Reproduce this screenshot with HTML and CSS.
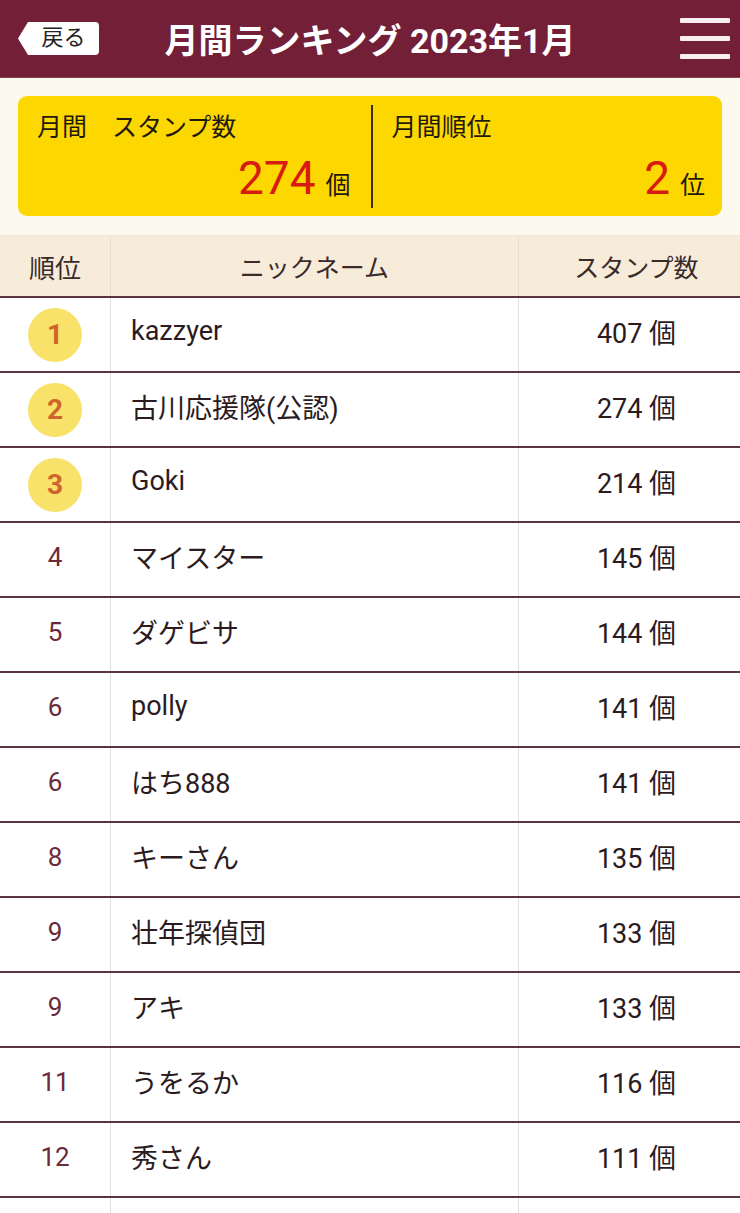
FILE: index.html
```html
<!DOCTYPE html>
<html lang="ja">
<head>
<meta charset="utf-8">
<title>月間ランキング</title>
<link rel="stylesheet" href="styles.css">
</head>
<body>
<header class="topbar">
  <div class="topbar-left"><a class="back-btn">戻る</a></div>
  <h1 class="title">月間ランキング 2023年1月</h1>
  <div class="topbar-right">
    <div class="menu-icon"><span></span><span></span><span></span></div>
  </div>
</header>

<section class="summary-wrap">
  <div class="summary">
    <div class="summary-cell">
      <div class="summary-label">月間　スタンプ数</div>
      <div class="summary-value"><span class="num">274</span><span class="unit">個</span></div>
    </div>
    <div class="summary-divider"></div>
    <div class="summary-cell">
      <div class="summary-label">月間順位</div>
      <div class="summary-value"><span class="num">2</span><span class="unit">位</span></div>
    </div>
  </div>
</section>

<div class="table">
  <div class="row head">
    <div class="c-rank">順位</div>
    <div class="c-name">ニックネーム</div>
    <div class="c-count">スタンプ数</div>
  </div>
  <div class="row">
    <div class="c-rank"><span class="medal">1</span></div>
    <div class="c-name">kazzyer</div>
    <div class="c-count">407 個</div>
  </div>
  <div class="row">
    <div class="c-rank"><span class="medal">2</span></div>
    <div class="c-name">古川応援隊(公認)</div>
    <div class="c-count">274 個</div>
  </div>
  <div class="row">
    <div class="c-rank"><span class="medal">3</span></div>
    <div class="c-name">Goki</div>
    <div class="c-count">214 個</div>
  </div>
  <div class="row">
    <div class="c-rank">4</div>
    <div class="c-name">マイスター</div>
    <div class="c-count">145 個</div>
  </div>
  <div class="row">
    <div class="c-rank">5</div>
    <div class="c-name">ダゲビサ</div>
    <div class="c-count">144 個</div>
  </div>
  <div class="row">
    <div class="c-rank">6</div>
    <div class="c-name">polly</div>
    <div class="c-count">141 個</div>
  </div>
  <div class="row">
    <div class="c-rank">6</div>
    <div class="c-name">はち888</div>
    <div class="c-count">141 個</div>
  </div>
  <div class="row">
    <div class="c-rank">8</div>
    <div class="c-name">キーさん</div>
    <div class="c-count">135 個</div>
  </div>
  <div class="row">
    <div class="c-rank">9</div>
    <div class="c-name">壮年探偵団</div>
    <div class="c-count">133 個</div>
  </div>
  <div class="row">
    <div class="c-rank">9</div>
    <div class="c-name">アキ</div>
    <div class="c-count">133 個</div>
  </div>
  <div class="row">
    <div class="c-rank">11</div>
    <div class="c-name">うをるか</div>
    <div class="c-count">116 個</div>
  </div>
  <div class="row">
    <div class="c-rank">12</div>
    <div class="c-name">秀さん</div>
    <div class="c-count">111 個</div>
  </div>
  <div class="row">
    <div class="c-rank"></div>
    <div class="c-name"></div>
    <div class="c-count"></div>
  </div>
</div>
</body>
</html>
```

FILE: styles.css
```css
* { box-sizing: border-box; }
html, body { margin: 0; padding: 0; }
body {
  background: #ffffff;
  font-family: Roboto, "Noto Sans CJK JP", sans-serif;
  color: #2b1b1e;
  width: 740px;
  overflow: hidden;
}

.topbar {
  height: 78px;
  background: #741f38;
  display: grid;
  grid-template-columns: 1fr auto 1fr;
  align-items: center;
  border-bottom: 1px solid #8a4456;
}
.topbar-left { padding-left: 18px; display: flex; align-items: center; }
.back-btn {
  display: flex;
  align-items: center;
  justify-content: center;
  width: 81px;
  height: 33px;
  margin-top: 0;
  padding-left: 10px;
  padding-bottom: 1px;
  background: #ffffff;
  color: #222;
  font-size: 22px;
  line-height: 1;
  border-radius: 4px;
  clip-path: polygon(10px 0, 100% 0, 100% 100%, 10px 100%, 0 50%);
}
.title {
  margin: 5px 0 0;
  color: #ffffff;
  font-size: 34px;
  font-weight: 700;
  line-height: 1;
  letter-spacing: 0;
  white-space: nowrap;
}
.topbar-right { display: flex; justify-content: flex-end; padding-right: 10px; }
.menu-icon {
  width: 50px;
  height: 41px;
  display: flex;
  flex-direction: column;
  justify-content: space-between;
  margin-top: 0;
}
.menu-icon span {
  display: block;
  height: 5px;
  background: #f6eef0;
  border-radius: 1px;
}

.summary-wrap {
  background: #fcf9ee;
  padding: 18px 18px 19px;
}
.summary {
  background: #fdd700;
  border-radius: 9px;
  height: 120px;
  display: flex;
  align-items: stretch;
  padding: 9px 0 8px;
}
.summary-cell {
  flex: 1;
  display: flex;
  flex-direction: column;
  justify-content: space-between;
  padding: 8px 17px 7px 19px;
}
.summary-cell:first-child { padding-right: 20px; }
.summary-divider {
  width: 2px;
  background: #3a2c10;
}
.summary-label {
  font-size: 25px;
  line-height: 1.2;
  color: #1f1a10;
}
.summary-value {
  text-align: right;
  line-height: 1;
  display: flex;
  justify-content: flex-end;
  align-items: baseline;
  gap: 10px;
}
.summary-value .num {
  color: #d81b10;
  font-size: 46px;
}
.summary-value .unit {
  font-size: 25px;
  color: #1f1a10;
}

.table { border-top: 1px solid #f1e7d6; }
.row {
  display: grid;
  grid-template-columns: 111px 408px 1fr;
  height: 75px;
  border-bottom: 2px solid #5a3440;
  font-size: 27px;
}
.row > div {
  display: flex;
  align-items: center;
  border-right: 1px solid #e2dedc;
}
.row > div:last-child { border-right: none; }
.row.head {
  height: 62px;
  background: #f7ecda;
  font-size: 25px;
}
.row.head > div {
  justify-content: center;
  border-right-color: #eadfcc;
  color: #3a2a2a;
  padding-bottom: 0;
}
.row.head .c-name { padding-left: 0; }
.c-rank {
  justify-content: center;
  color: #6b2a3c;
  font-size: 26px;
  padding-bottom: 6px;
}
.c-name {
  padding-left: 20px;
  padding-bottom: 7px;
  color: #2b1b1e;
}
.c-count {
  justify-content: center;
  padding-left: 14px;
  padding-bottom: 7px;
  color: #2b1b1e;
}
.row .c-rank:has(.medal) { padding-bottom: 0; }
.medal {
  width: 54px;
  height: 54px;
  border-radius: 50%;
  background: #f8e26a;
  color: #d0642c;
  font-weight: 700;
  font-size: 28px;
  display: flex;
  align-items: center;
  justify-content: center;
}
```
